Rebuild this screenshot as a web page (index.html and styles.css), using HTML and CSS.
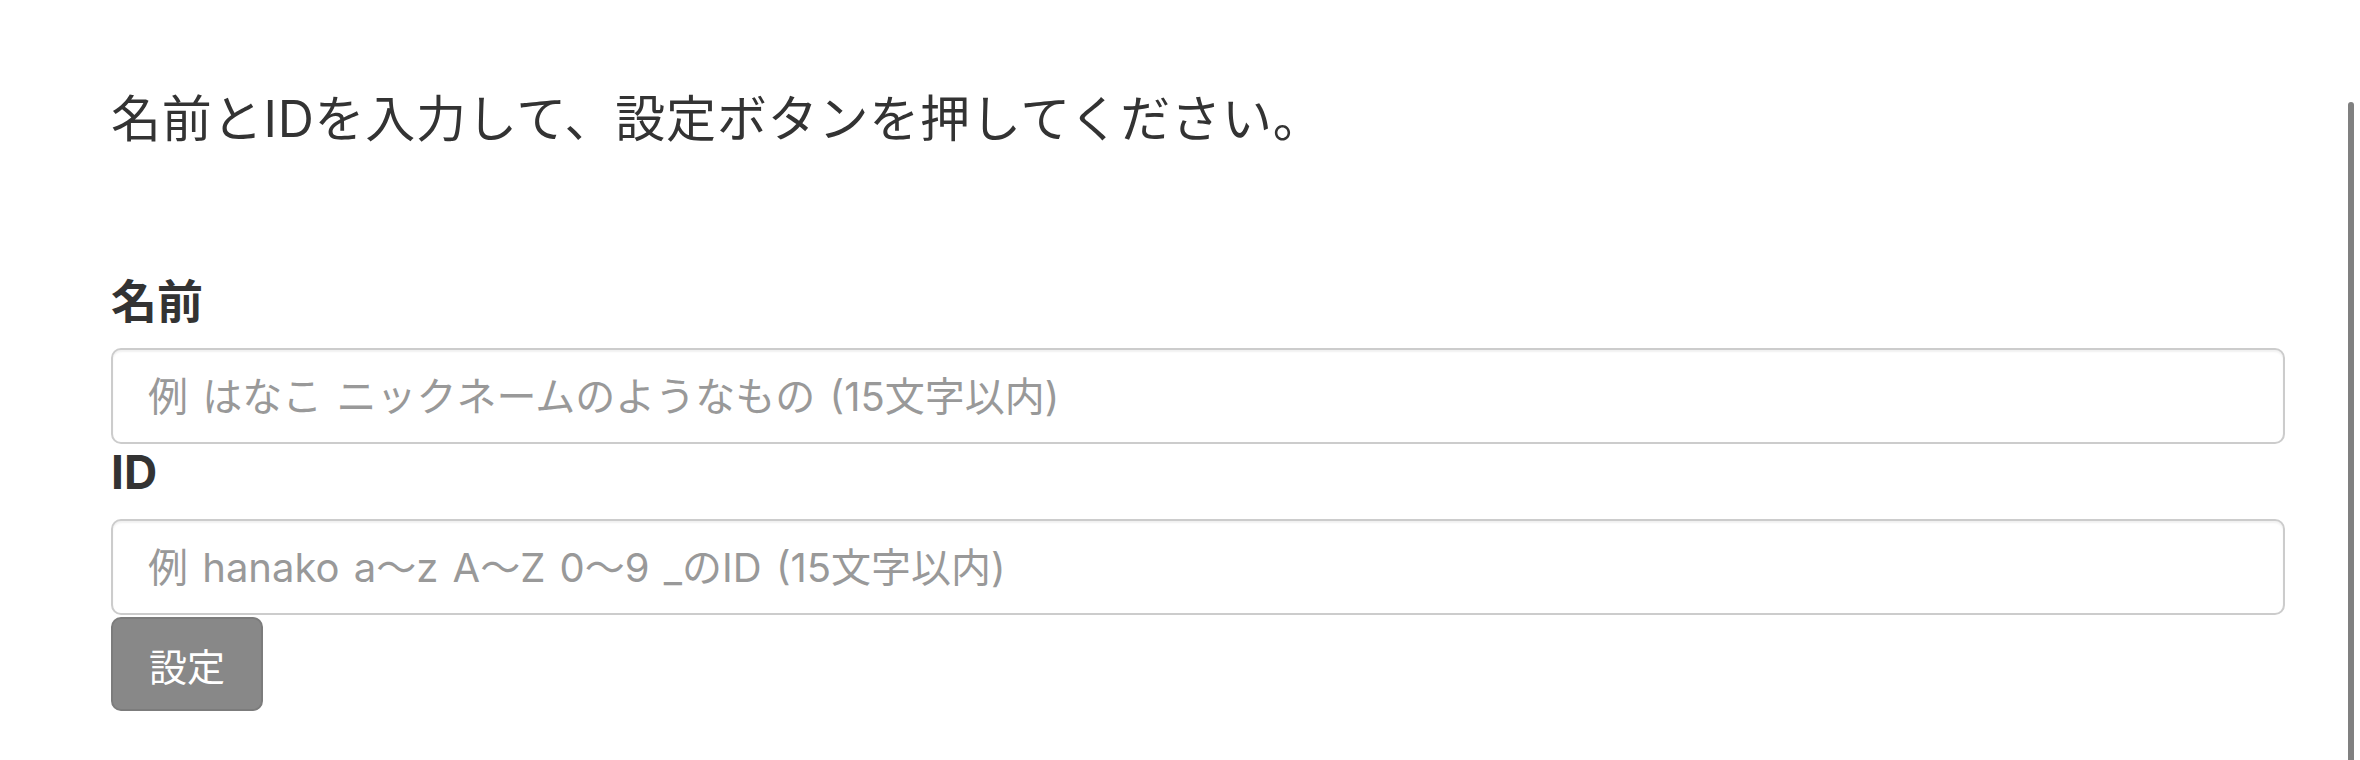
FILE: index.html
```html
<!DOCTYPE html>
<html lang="ja">
<head>
<meta charset="utf-8">
<title>設定</title>
<link rel="stylesheet" href="styles.css">
</head>
<body>
<main class="page">
  <p class="lead">名前とIDを入力して、設定ボタンを押してください。</p>
  <form class="form">
    <label class="label" for="name">名前</label>
    <input class="field" id="name" type="text" placeholder="例 はなこ ニックネームのようなもの (15文字以内)">
    <label class="label" for="uid">ID</label>
    <input class="field" id="uid" type="text" placeholder="例 hanako a〜z A〜Z 0〜9 _のID (15文字以内)">
    <button class="btn" type="button">設定</button>
  </form>
</main>
<div class="scrollbar"></div>
</body>
</html>
```
FILE: styles.css
```css
html, body {
  margin: 0;
  padding: 0;
  background: #ffffff;
  height: 100%;
  overflow: hidden;
}
body {
  font-family: Inter, "Noto Sans CJK JP", sans-serif;
  color: #333333;
  position: relative;
}
.page {
  padding: 95px 75px 0 111px;
}
.lead {
  margin: 0 0 132px 0;
  font-size: 50px;
  line-height: 48px;
  letter-spacing: 0.8px;
  font-weight: 400;
  color: #333333;
}
.form {
  display: flex;
  flex-direction: column;
  align-items: stretch;
}
.label {
  display: block;
  margin: 3px 0 24px 0;
  font-size: 46px;
  line-height: 46px;
  font-weight: 700;
  color: #333333;
}
.field {
  box-sizing: border-box;
  height: 96px;
  margin: 0 0 2px 0;
  padding: 0 35px;
  border: 2px solid #cccccc;
  border-radius: 10px;
  background: #ffffff;
  box-shadow: inset 0 2px 2px rgba(0, 0, 0, 0.06);
  font-family: Inter, "Noto Sans CJK JP", sans-serif;
  font-size: 40px;
  word-spacing: 3px;
  color: #333333;
  outline: none;
}
.field::placeholder {
  color: #999999;
  opacity: 1;
}
.btn {
  align-self: flex-start;
  box-sizing: border-box;
  height: 94px;
  padding: 0 36px;
  border: 2px solid #7c7c7c;
  border-radius: 10px;
  background: #888888;
  color: #ffffff;
  font-family: Inter, "Noto Sans CJK JP", sans-serif;
  font-size: 38px;
  font-weight: 400;
  cursor: pointer;
}
.scrollbar {
  position: absolute;
  top: 102px;
  right: 6px;
  bottom: 0;
  width: 6px;
  border-radius: 3px 3px 0 0;
  background: #808080;
}
```
